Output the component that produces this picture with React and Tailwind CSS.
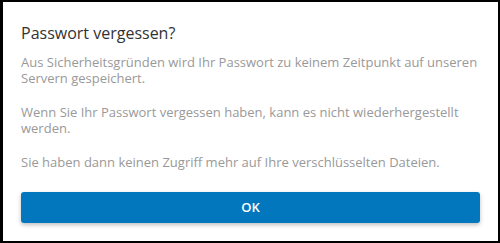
export default function App() {
  return (
    <div className="w-[500px] h-[243px] bg-white" style={{ fontFamily: '"Open Sans", sans-serif' }}>
      <div className="h-full border-black border-t-2 border-r-2 border-b-2 border-l-[3px] px-[18px] pt-[20px] flex flex-col">
        <h2 className="text-[16px] leading-[22px] text-[#333]">Passwort vergessen?</h2>
        <div className="mt-[10px] text-[13px] leading-[16px] text-[#999] flex flex-col gap-[18px]">
          <p>Aus Sicherheitsgründen wird Ihr Passwort zu keinem Zeitpunkt auf unseren Servern gespeichert.</p>
          <p>Wenn Sie Ihr Passwort vergessen haben, kann es nicht wiederhergestellt werden.</p>
          <p>Sie haben dann keinen Zugriff mehr auf Ihre verschlüsselten Dateien.</p>
        </div>
        <button className="mt-[22px] h-[31px] w-full rounded-[3px] bg-[#0277bd] text-white text-[13px] font-semibold shadow-[0_2px_4px_rgba(0,0,0,0.25)]">
          OK
        </button>
      </div>
    </div>
  );
}
